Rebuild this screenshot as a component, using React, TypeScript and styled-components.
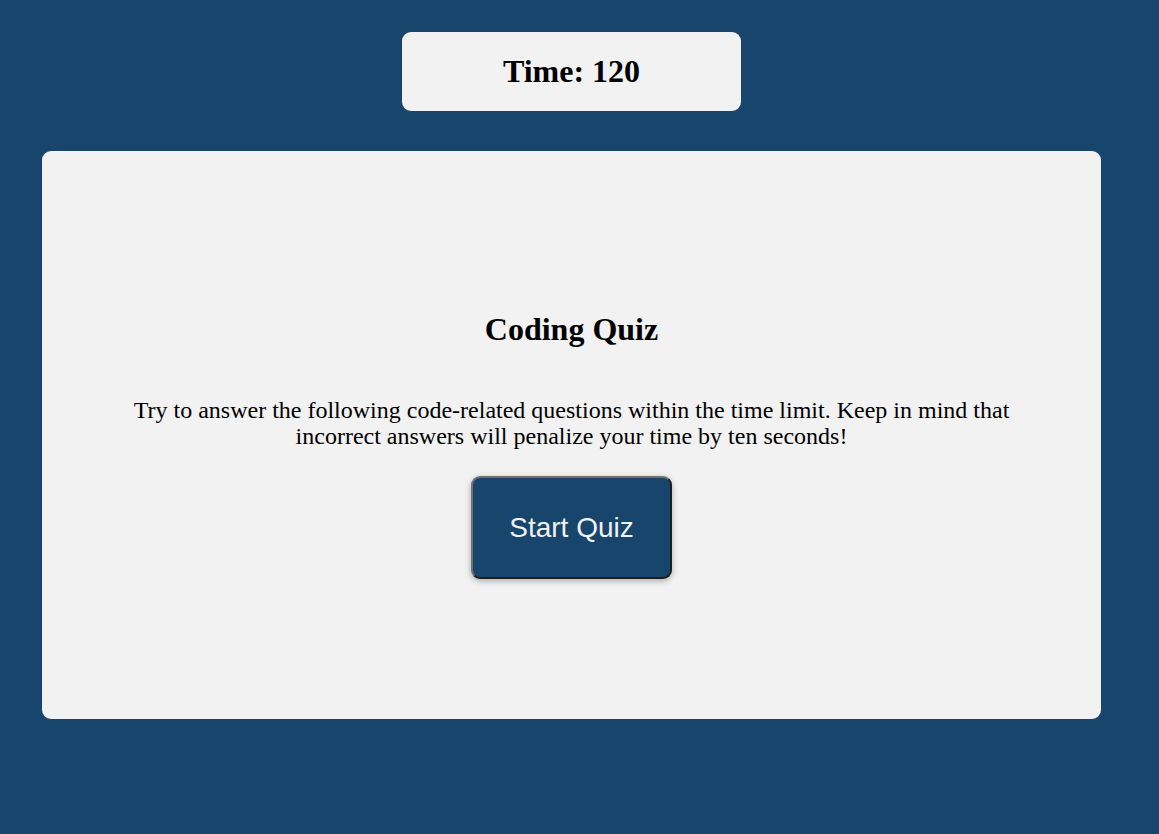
import styled, { createGlobalStyle } from "styled-components";

const GlobalStyle = createGlobalStyle`
  html, body {
    margin: 0;
    padding: 0;
    background-color: #18456b;
    font-family: "Liberation Serif", "Times New Roman", serif;
  }
`;

const Page = styled.main`
  width: 1059px;
  margin-left: 42px;
  padding: 32px 0 114px;
  display: flex;
  flex-direction: column;
  align-items: center;
  gap: 40px;
`;

const Timer = styled.header`
  width: 339px;
  height: 79px;
  border-radius: 9px;
  background-color: #f2f2f2;
  display: flex;
  align-items: center;
  justify-content: center;
`;

const TimerText = styled.h1`
  margin: 0;
  font-size: 32px;
  font-weight: 700;
  color: #000;
`;

const Card = styled.section`
  box-sizing: border-box;
  width: 1059px;
  height: 568px;
  padding: 160px 60px 0;
  border-radius: 9px;
  background-color: #f2f2f2;
  display: flex;
  flex-direction: column;
  align-items: center;
  text-align: center;
`;

const Title = styled.h2`
  margin: 0 0 49px;
  font-size: 32px;
  line-height: 37px;
  font-weight: 700;
  color: #000;
`;

const Intro = styled.p`
  margin: 0 0 27px;
  font-size: 24px;
  line-height: 26px;
  color: #000;
`;

const StartButton = styled.button`
  box-sizing: border-box;
  width: 201px;
  height: 103px;
  border-radius: 9px;
  border: 2px solid;
  border-color: #707070 #1e1e1e #1e1e1e #707070;
  background-color: #18456b;
  color: #f2f2f2;
  font-family: "Liberation Sans", Arial, sans-serif;
  font-size: 28px;
  box-shadow: 0 2px 6px rgba(0, 0, 0, 0.3);
  cursor: pointer;
`;

export default function App() {
  return (
    <>
      <GlobalStyle />
      <Page>
        <Timer>
          <TimerText>Time: 120</TimerText>
        </Timer>
        <Card>
          <Title>Coding Quiz</Title>
          <Intro>
            Try to answer the following code-related questions within the time
            limit. Keep in mind that incorrect answers will penalize your time
            by ten seconds!
          </Intro>
          <StartButton>Start Quiz</StartButton>
        </Card>
      </Page>
    </>
  );
}
